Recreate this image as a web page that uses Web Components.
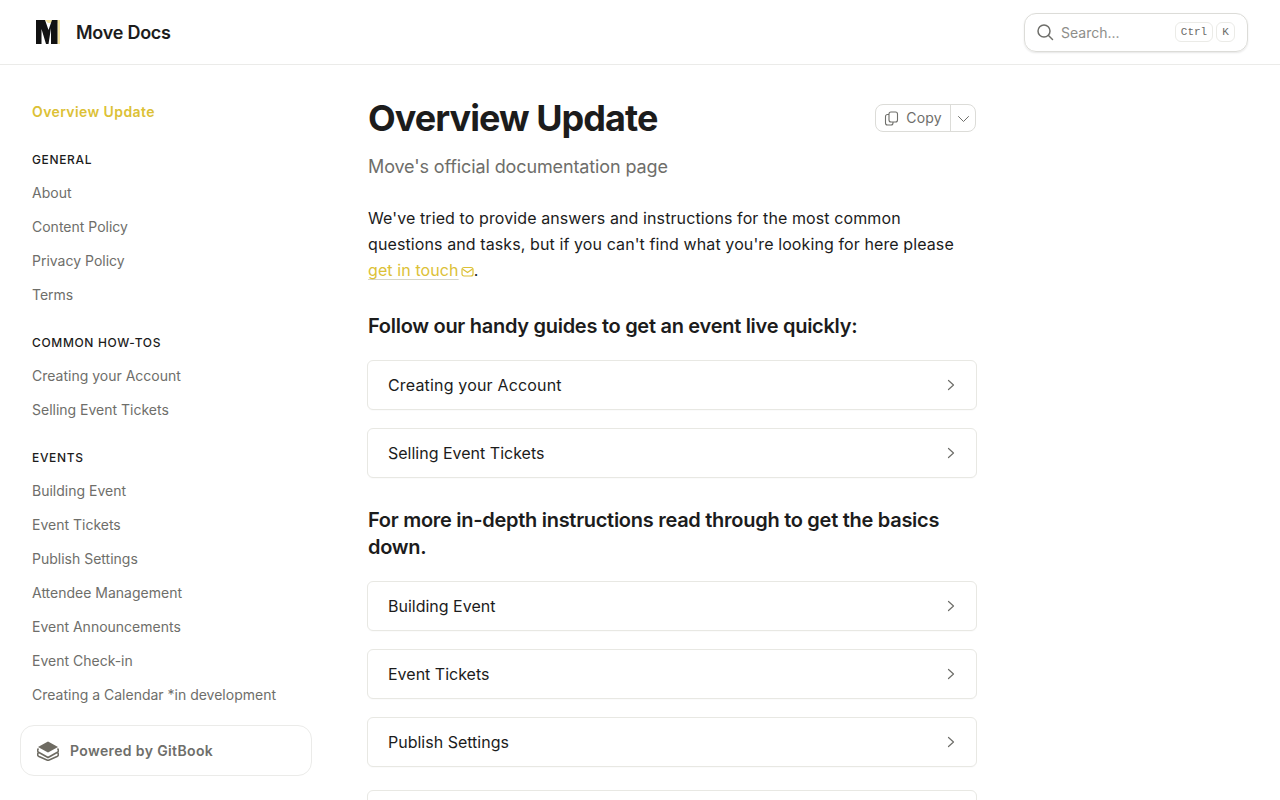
<!DOCTYPE html>
<html lang="en">
<head>
<meta charset="utf-8">
<title>Move Docs</title>
<style>
  html, body { margin: 0; height: 100%; overflow: hidden; background: #fff; }
  body { font-family: Inter, "Liberation Sans", sans-serif; color: #1c1c1c; }
  .page { display: flex; height: 735px; }
</style>
</head>
<body>
<docs-header></docs-header>
<div class="page">
  <docs-sidebar></docs-sidebar>
  <docs-main>
    <page-title slot="title">Overview Update</page-title>
    <p>We've tried to provide answers and instructions for the most common questions and tasks, but if you can't find what you're looking for here please <mail-link>get in touch</mail-link>.</p>
    <h2>Follow our handy guides to get an event live quickly:</h2>
    <link-card style="letter-spacing: .17px">Creating your Account</link-card>
    <link-card>Selling Event Tickets</link-card>
    <h2>For more in-depth instructions read through to get the basics down.</h2>
    <link-card>Building Event</link-card>
    <link-card>Event Tickets</link-card>
    <link-card>Publish Settings</link-card>
    <link-card style="margin-top: 23px"></link-card>
  </docs-main>
</div>

<script>
class DocsHeader extends HTMLElement {
  constructor() {
    super();
    this.attachShadow({ mode: 'open' });
    this.shadowRoot.innerHTML = `
      <style>
        :host { display: flex; align-items: center; justify-content: space-between; height: 64px; border-bottom: 1px solid #ebebe9; padding: 0 32px; }
        .brand { display: flex; align-items: center; gap: 16px; font-size: 18px; font-weight: 600; color: #1c1c1c; letter-spacing: -0.25px; }
        .brand svg { display: block; }
        .search { display: flex; align-items: center; width: 224px; height: 39px; box-sizing: border-box; margin-right: -32px; position: relative; left: -32px; padding: 0 12px 0 11px; border: 1px solid #dcdcd8; border-radius: 12px; box-shadow: 0 1px 2px rgba(0,0,0,.1); font-size: 14px; color: #8e8e8a; }
        .search svg { margin-right: 7px; flex: none; }
        .search span { flex: 1; }
        kbd { display: block; font-family: "Liberation Mono", monospace; font-size: 11px; color: #6b6b67; border: 1px solid #ebebe7; border-radius: 6px; height: 20px; line-height: 18px; text-align: center; box-sizing: border-box; }
        kbd.ctrl { width: 38px; }
        kbd.k { width: 19px; margin-left: 3px; }
      </style>
      <div class="brand">
        <svg width="28" height="24" viewBox="0 0 28 24">
          <path d="M13 0H28V24H25.500V3H16z" fill="#f3e2a0"/>
          <path d="M4 0H13L16.500 10 20 0H25.500V24H19V8L16.500 24H14L9.500 9V24H4z" fill="#111"/>
        </svg>
        <span>Move Docs</span>
      </div>
      <div class="search">
        <svg width="18" height="18" viewBox="0 0 18 18" fill="none" stroke="#6e6e6a" stroke-width="1.5" stroke-linecap="round"><circle cx="8" cy="8" r="6"/><path d="M12.5 12.5 16.5 16.5"/></svg>
        <span>Search...</span>
        <kbd class="ctrl">Ctrl</kbd><kbd class="k">K</kbd>
      </div>`;
  }
}
customElements.define('docs-header', DocsHeader);

const NAV = [
  [null, ['Overview Update']],
  ['General', ['About', 'Content Policy', 'Privacy Policy', 'Terms']],
  ['Common How-Tos', ['Creating your Account', 'Selling Event Tickets']],
  ['Events', ['Building Event', 'Event Tickets', 'Publish Settings', 'Attendee Management', 'Event Announcements', 'Event Check-in', 'Creating a Calendar *in development']],
];

class DocsSidebar extends HTMLElement {
  constructor() {
    super();
    this.attachShadow({ mode: 'open' });
    const groups = NAV.map(([title, items]) => `
      <section>
        ${title ? `<h5>${title}</h5>` : ''}
        ${items.map(i => `<a class="${title ? '' : 'active'}">${i}</a>`).join('')}
      </section>`).join('');
    this.shadowRoot.innerHTML = `
      <style>
        :host { display: flex; flex-direction: column; width: 336px; flex: none; box-sizing: border-box; padding: 0 24px 24px 20px; font-size: 14px; }
        nav { flex: 1; min-height: 0; overflow: hidden; padding: 30px 0 0 12px; }
        section { margin-bottom: 16px; }
        h5 { margin: 0; height: 31px; line-height: 29px; font-size: 12px; font-weight: 500; letter-spacing: .65px; text-transform: uppercase; color: #1c1c1c; }
        a { display: block; height: 34px; line-height: 34px; color: #6e6e6a; white-space: nowrap; }
        a.active { color: #dcc136; font-weight: 600; letter-spacing: .4px; }
        .powered { display: flex; align-items: center; gap: 11px; height: 51px; box-sizing: border-box; padding: 0 16px; border: 1px solid #ebebe9; border-radius: 14px; font-weight: 600; color: #6e6e6a; letter-spacing: .37px; width: 292px; }
      </style>
      <nav>${groups}</nav>
      <div class="powered">
        <svg width="22" height="20" viewBox="0 0 22 20" fill="none"><path d="M11 .5 21 6l-10 5.500L1 6z" fill="#6e6b62"/><path d="M1.500 7.500C.2 9 .4 10.600 2 11.500l9 5 9-5c1.600-.9 1.800-2.500.5-4" stroke="#6e6b62" stroke-width="1.600"/><path d="M1.500 11.500C.2 13 .4 14.600 2 15.500l9 4 9-4c1.600-.9 1.800-2.500.5-4" stroke="#6e6b62" stroke-width="1.600"/></svg>
        <span>Powered by GitBook</span>
      </div>`;
  }
}
customElements.define('docs-sidebar', DocsSidebar);

class PageTitle extends HTMLElement {
  constructor() {
    super();
    this.attachShadow({ mode: 'open' });
    this.shadowRoot.innerHTML = `
      <style>
        :host { display: flex; align-items: center; justify-content: space-between; height: 44px; }
        h1 { margin: 0; font-size: 36px; line-height: 44px; font-weight: 700; letter-spacing: -0.95px; color: #1c1c1c; }
        .copy { display: flex; height: 28px; box-sizing: border-box; border: 1px solid #dcdcd8; border-radius: 8px; font-size: 14px; color: #6e6e6a; }
        .copy div { display: flex; align-items: center; }
        .main { gap: 7px; padding: 0 8px; border-right: 1px solid #dcdcd8; }
        .main span { letter-spacing: .25px; }
        .more { padding: 0 5px 0 6px; }
      </style>
      <h1><slot></slot></h1>
      <div class="copy">
        <div class="main">
          <svg width="15" height="15" viewBox="0 0 15 15" fill="none" stroke="#6e6e6a" stroke-width="1.100"><rect x="5" y="1" width="8.500" height="10" rx="2"/><path d="M5 3.500H3.500a2 2 0 0 0-2 2V12a2 2 0 0 0 2 2H7a2 2 0 0 0 2-2v-1"/></svg>
          <span>Copy</span>
        </div>
        <div class="more">
          <svg width="13" height="13" viewBox="0 0 13 13" fill="none" stroke="#6e6e6a" stroke-width="1" stroke-linecap="round" stroke-linejoin="round"><path d="M1.500 4.500 6.500 9.500 11.500 4.500"/></svg>
        </div>
      </div>`;
  }
}
customElements.define('page-title', PageTitle);

class DocsMain extends HTMLElement {
  constructor() {
    super();
    this.attachShadow({ mode: 'open' });
    this.shadowRoot.innerHTML = `
      <style>
        :host { display: block; width: 608px; margin-left: 32px; padding-top: 31px; font-size: 16px; line-height: 26px; color: #1c1c1c; }
        .desc { margin: 13px 0 24px; font-size: 18px; line-height: 28px; color: #6e6e6a; letter-spacing: -0.12px; }
        ::slotted(p) { margin: 0 0 29px; letter-spacing: .1px; }
        ::slotted(h2) { margin: 28px 0 20px; padding-top: 1px; font-size: 20px; line-height: 27px; font-weight: 600; letter-spacing: -0.28px; }
      </style>
      <slot name="title"></slot>
      <p class="desc">Move's official documentation page</p>
      <slot></slot>`;
  }
}
customElements.define('docs-main', DocsMain);

class MailLink extends HTMLElement {
  constructor() {
    super();
    this.attachShadow({ mode: 'open' });
    this.shadowRoot.innerHTML = `
      <style>
        :host { display: inline; color: #dcc136; }
        a { color: inherit; text-decoration: underline; text-decoration-color: #d6d6c8; text-underline-offset: 3px; text-decoration-thickness: 1px; }
        svg { vertical-align: -1px; margin-left: 2px; }
      </style>
      <a><slot></slot></a><svg width="13" height="11" viewBox="0 0 13 11" fill="none" stroke="#dcc136" stroke-width="1.200"><rect x="1" y="1.500" width="11" height="8.500" rx="2"/><path d="M1.500 3 6.500 6.500 11.500 3"/></svg>`;
  }
}
customElements.define('mail-link', MailLink);

class LinkCard extends HTMLElement {
  constructor() {
    super();
    this.attachShadow({ mode: 'open' });
    this.shadowRoot.innerHTML = `
      <style>
        :host { display: flex; align-items: center; justify-content: space-between; height: 50px; box-sizing: border-box; margin: 0 -1px 18px; padding: 0 20px; border: 1px solid #e8e8e3; border-radius: 6px; background: #fff; box-shadow: 0 1px 1px rgba(0,0,0,.02); }
      </style>
      <span><slot></slot></span>
      <svg width="10" height="12" viewBox="0 0 10 12" fill="none" stroke="#6e6e6a" stroke-width="1.200" stroke-linecap="round" stroke-linejoin="round"><path d="M2.500 1.500 7.500 6 2.500 10.500"/></svg>`;
  }
}
customElements.define('link-card', LinkCard);
</script>
</body>
</html>
